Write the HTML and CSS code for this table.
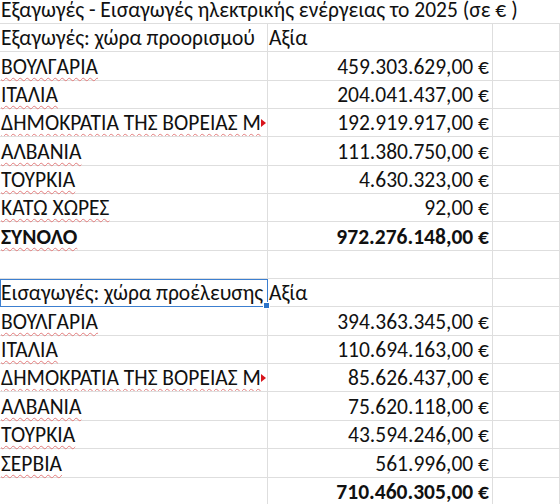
FILE: index.html
```html
<!DOCTYPE html>
<html lang="el">
<head>
<meta charset="utf-8">
<title>Εξαγωγές - Εισαγωγές ηλεκτρικής ενέργειας</title>
<link rel="stylesheet" href="styles.css">
</head>
<body>
<div class="sheet">
  <div class="cell title">Εξαγωγές - Εισαγωγές ηλεκτρικής ενέργειας το 2025 (σε € )</div>

  <div class="cell">Εξαγωγές: χώρα προορισμού</div>
  <div class="cell">Αξία</div>
  <div class="cell"></div>

  <div class="cell"><span class="sp">ΒΟΥΛΓΑΡΙΑ</span></div>
  <div class="cell num">459.303.629,00 €</div>
  <div class="cell"></div>

  <div class="cell"><span class="sp">ΙΤΑΛΙΑ</span></div>
  <div class="cell num">204.041.437,00 €</div>
  <div class="cell"></div>

  <div class="cell clip"><span class="sp">ΔΗΜΟΚΡΑΤΙΑ ΤΗΣ ΒΟΡΕΙΑΣ Μ</span><span class="more"></span></div>
  <div class="cell num">192.919.917,00 €</div>
  <div class="cell"></div>

  <div class="cell"><span class="sp">ΑΛΒΑΝΙΑ</span></div>
  <div class="cell num">111.380.750,00 €</div>
  <div class="cell"></div>

  <div class="cell"><span class="sp">ΤΟΥΡΚΙΑ</span></div>
  <div class="cell num">4.630.323,00 €</div>
  <div class="cell"></div>

  <div class="cell"><span class="sp">ΚΑΤΩ ΧΩΡΕΣ</span></div>
  <div class="cell num">92,00 €</div>
  <div class="cell"></div>

  <div class="cell bold"><span class="sp">ΣΥΝΟΛΟ</span></div>
  <div class="cell num bold">972.276.148,00 €</div>
  <div class="cell"></div>

  <div class="cell"></div>
  <div class="cell"></div>
  <div class="cell"></div>

  <div class="cell selected">Εισαγωγές: χώρα προέλευσης<span class="handle"></span></div>
  <div class="cell">Αξία</div>
  <div class="cell"></div>

  <div class="cell"><span class="sp">ΒΟΥΛΓΑΡΙΑ</span></div>
  <div class="cell num">394.363.345,00 €</div>
  <div class="cell"></div>

  <div class="cell"><span class="sp">ΙΤΑΛΙΑ</span></div>
  <div class="cell num">110.694.163,00 €</div>
  <div class="cell"></div>

  <div class="cell clip"><span class="sp">ΔΗΜΟΚΡΑΤΙΑ ΤΗΣ ΒΟΡΕΙΑΣ Μ</span><span class="more"></span></div>
  <div class="cell num">85.626.437,00 €</div>
  <div class="cell"></div>

  <div class="cell"><span class="sp">ΑΛΒΑΝΙΑ</span></div>
  <div class="cell num">75.620.118,00 €</div>
  <div class="cell"></div>

  <div class="cell"><span class="sp">ΤΟΥΡΚΙΑ</span></div>
  <div class="cell num">43.594.246,00 €</div>
  <div class="cell"></div>

  <div class="cell"><span class="sp">ΣΕΡΒΙΑ</span></div>
  <div class="cell num">561.996,00 €</div>
  <div class="cell"></div>

  <div class="cell"></div>
  <div class="cell num bold">710.460.305,00 €</div>
  <div class="cell"></div>
</div>
</body>
</html>
```
FILE: styles.css
```css
html, body {
  margin: 0;
  padding: 0;
  background: #ffffff;
}

body {
  font-family: Carlito, "Noto Sans", "Liberation Sans", sans-serif;
  font-size: 21.5px;
  color: #111111;
  overflow: hidden;
}

.sheet {
  display: grid;
  grid-template-columns: 268px 225px 1fr;
  grid-template-rows: 24px repeat(17, 28.35px);
  width: 560px;
}

.cell {
  position: relative;
  box-sizing: border-box;
  display: flex;
  align-items: flex-end;
  padding: 0 2px 0 1px;
  border-bottom: 1px solid #dedede;
  border-right: 1px solid #dedede;
  line-height: 26px;
  white-space: nowrap;
  min-width: 0;
}

.title {
  grid-column: 1 / 4;
  border-right: 0;
  line-height: 22px;
  padding-bottom: 2px;
  overflow: visible;
}

.num {
  justify-content: flex-end;
  padding-right: 3px;
}

.bold {
  font-weight: bold;
}

.sp {
  text-decoration: underline wavy #e37b7b;
  text-decoration-thickness: 1px;
  text-underline-offset: 3px;
  text-decoration-skip-ink: none;
}

.clip {
  overflow: hidden;
  padding-right: 6px;
}

.more {
  position: absolute;
  right: 1px;
  top: 10px;
  width: 0;
  height: 0;
  border-top: 4px solid transparent;
  border-bottom: 4px solid transparent;
  border-left: 5px solid #d9141b;
}

.selected {
  outline: 1.5px solid #3c7fd0;
  outline-offset: -1px;
  z-index: 1;
}

.handle {
  position: absolute;
  right: -3px;
  bottom: -3px;
  width: 5px;
  height: 5px;
  background: #2a73c9;
  border: 1px solid #ffffff;
}
```
